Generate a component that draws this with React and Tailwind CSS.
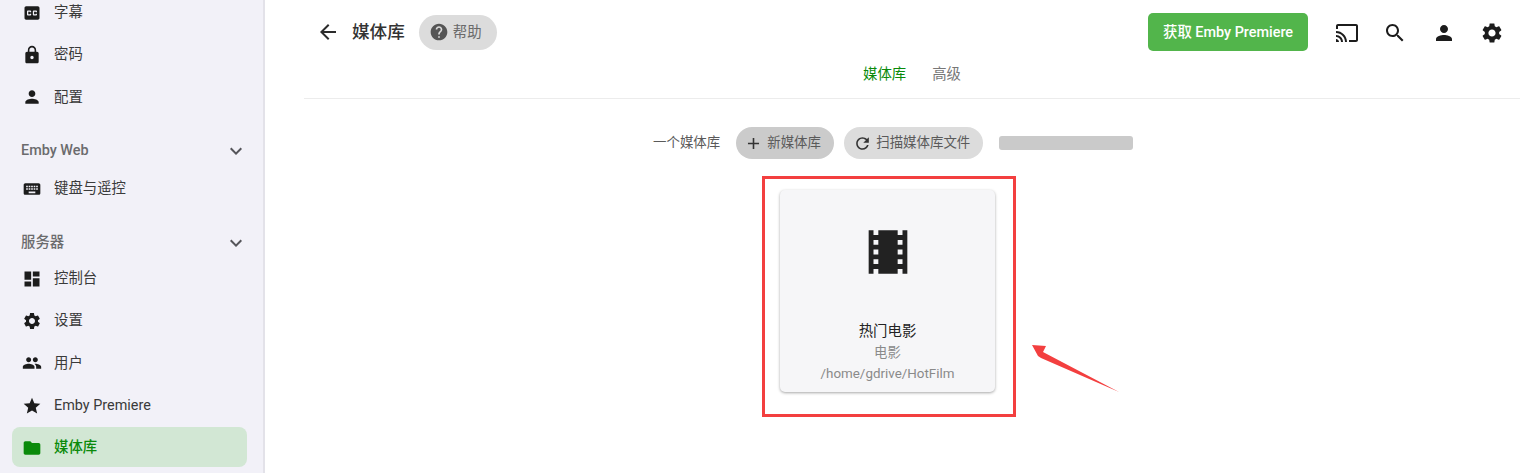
import React from "react";

const P = {
  cc: "M19 4H5c-1.11 0-2 .9-2 2v12c0 1.1.89 2 2 2h14c1.1 0 2-.9 2-2V6c0-1.1-.9-2-2-2zm-8 7H9.5v-.5h-2v3h2V13H11v1c0 .55-.45 1-1 1H7c-.55 0-1-.45-1-1v-4c0-.55.45-1 1-1h3c.55 0 1 .45 1 1v1zm7 0h-1.5v-.5h-2v3h2V13H18v1c0 .55-.45 1-1 1h-3c-.55 0-1-.45-1-1v-4c0-.55.45-1 1-1h3c.55 0 1 .45 1 1v1z",
  lock: "M18 8h-1V6c0-2.76-2.24-5-5-5S7 3.24 7 6v2H6c-1.1 0-2 .9-2 2v10c0 1.1.9 2 2 2h12c1.1 0 2-.9 2-2V10c0-1.1-.9-2-2-2zm-6 9c-1.1 0-2-.9-2-2s.9-2 2-2 2 .9 2 2-.9 2-2 2zm3.1-9H8.9V6c0-1.71 1.39-3.1 3.1-3.1 1.71 0 3.1 1.39 3.1 3.1v2z",
  person: "M12 12c2.21 0 4-1.79 4-4s-1.79-4-4-4-4 1.79-4 4 1.79 4 4 4zm0 2c-2.67 0-8 1.34-8 4v2h16v-2c0-2.66-5.33-4-8-4z",
  keyboard: "M20 5H4c-1.1 0-1.99.9-1.99 2L2 17c0 1.1.9 2 2 2h16c1.1 0 2-.9 2-2V7c0-1.1-.9-2-2-2zm-9 3h2v2h-2V8zm0 3h2v2h-2v-2zM8 8h2v2H8V8zm0 3h2v2H8v-2zm-1 2H5v-2h2v2zm0-3H5V8h2v2zm9 7H8v-2h8v2zm0-4h-2v-2h2v2zm0-3h-2V8h2v2zm3 3h-2v-2h2v2zm0-3h-2V8h2v2z",
  dashboard: "M3 13h8V3H3v10zm0 8h8v-6H3v6zm10 0h8V11h-8v10zm0-18v6h8V3h-8z",
  settings: "M19.14 12.94c.04-.3.06-.61.06-.94 0-.32-.02-.64-.07-.94l2.03-1.58c.18-.14.23-.41.12-.61l-1.92-3.32c-.12-.22-.37-.29-.59-.22l-2.39.96c-.5-.38-1.03-.7-1.62-.94l-.36-2.54c-.04-.24-.24-.41-.48-.41h-3.84c-.24 0-.43.17-.47.41l-.36 2.54c-.59.24-1.13.57-1.62.94l-2.39-.96c-.22-.08-.47 0-.59.22L2.74 8.87c-.12.21-.08.47.12.61l2.03 1.58c-.05.3-.09.63-.09.94s.02.64.07.94l-2.03 1.58c-.18.14-.23.41-.12.61l1.92 3.32c.12.22.37.29.59.22l2.39-.96c.5.38 1.03.7 1.62.94l.36 2.54c.05.24.24.41.48.41h3.84c.24 0 .44-.17.47-.41l.36-2.54c.59-.24 1.13-.56 1.62-.94l2.39.96c.22.08.47 0 .59-.22l1.92-3.32c.12-.22.07-.47-.12-.61l-2.01-1.58zM12 15.6c-1.98 0-3.6-1.62-3.6-3.6s1.62-3.6 3.6-3.6 3.6 1.62 3.6 3.6-1.62 3.6-3.6 3.6z",
  people: "M16 11c1.66 0 2.99-1.34 2.99-3S17.66 5 16 5c-1.66 0-3 1.34-3 3s1.34 3 3 3zm-8 0c1.66 0 2.99-1.34 2.99-3S9.66 5 8 5C6.34 5 5 6.34 5 8s1.34 3 3 3zm0 2c-2.33 0-7 1.17-7 3.5V19h14v-2.5c0-2.33-4.67-3.5-7-3.5zm8 0c-.29 0-.62.02-.97.05 1.16.84 1.97 1.97 1.97 3.45V19h6v-2.5c0-2.33-4.67-3.5-7-3.5z",
  star: "M12 17.27L18.18 21l-1.64-7.03L22 9.24l-7.19-.61L12 2 9.19 8.63 2 9.24l5.46 4.73L5.82 21z",
  folder: "M10 4H4c-1.1 0-1.99.9-1.99 2L2 18c0 1.1.9 2 2 2h16c1.1 0 2-.9 2-2V8c0-1.1-.9-2-2-2h-8l-2-2z",
  expand: "M16.59 8.59L12 13.17 7.41 8.59 6 10l6 6 6-6z",
  back: "M20 11H7.83l5.59-5.59L12 4l-8 8 8 8 1.41-1.41L7.83 13H20v-2z",
  help: "M12 2C6.48 2 2 6.48 2 12s4.48 10 10 10 10-4.48 10-10S17.52 2 12 2zm1 17h-2v-2h2v2zm2.07-7.75l-.9.92C13.45 12.9 13 13.5 13 15h-2v-.5c0-1.1.45-2.1 1.17-2.83l1.24-1.26c.37-.36.59-.86.59-1.41 0-1.1-.9-2-2-2s-2 .9-2 2H8c0-2.21 1.79-4 4-4s4 1.79 4 4c0 .88-.36 1.68-.93 2.25z",
  cast: "M21 3H3c-1.1 0-2 .9-2 2v3h2V5h18v14h-7v2h7c1.1 0 2-.9 2-2V5c0-1.1-.9-2-2-2zM1 18v3h3c0-1.66-1.34-3-3-3zm0-4v2c2.76 0 5 2.24 5 5h2c0-3.87-3.13-7-7-7zm0-4v2c4.97 0 9 4.03 9 9h2c0-6.08-4.93-11-11-11z",
  search: "M15.5 14h-.79l-.28-.27C15.41 12.59 16 11.11 16 9.5 16 5.91 13.09 3 9.5 3S3 5.91 3 9.5 5.91 16 9.5 16c1.61 0 3.09-.59 4.23-1.57l.27.28v.79l5 4.99L20.49 19l-4.99-5zm-6 0C7.01 14 5 11.99 5 9.5S7.01 5 9.5 5 14 7.01 14 9.5 11.99 14 9.5 14z",
  add: "M19 13h-6v6h-2v-6H5v-2h6V5h2v6h6v2z",
  refresh: "M17.65 6.35C16.2 4.9 14.21 4 12 4c-4.42 0-7.99 3.58-7.99 8s3.57 8 7.99 8c3.73 0 6.84-2.55 7.73-6h-2.08c-.82 2.33-3.04 4-5.65 4-3.31 0-6-2.69-6-6s2.69-6 6-6c1.66 0 3.14.69 4.22 1.78L13 11h7V4l-2.35 2.35z",
  movie: "M18 3v2h-2V3H8v2H6V3H4v18h2v-2h2v2h8v-2h2v2h2V3h-2zM8 17H6v-2h2v2zm0-4H6v-2h2v2zm0-4H6V7h2v2zm10 8h-2v-2h2v2zm0-4h-2v-2h2v2zm0-4h-2V7h2v2z",
};

function Icon({ d, className }) {
  return (
    <svg viewBox="0 0 24 24" fill="currentColor" className={className}>
      <path d={P[d]} />
    </svg>
  );
}

function Row({ icon, label, active }) {
  return (
    <div
      className={
        "flex items-center h-10 pt-[2px] mb-[2.2px] ml-3 mr-4 pl-[10px] rounded-lg text-[14.4px] " +
        (active ? "bg-[#d2e7d4] text-[#0a8a0a] font-medium" : "text-[#3a3a3a]")
      }
    >
      <Icon d={icon} className={"w-5 h-5 shrink-0 " + (active ? "text-[#0a8a0a]" : "text-[#1c1c1c]")} />
      <span className="ml-3">{label}</span>
    </div>
  );
}

function Group({ label, className }) {
  return (
    <div className={"flex items-center justify-between h-[22px] pl-[21px] pr-[15px] text-[14.4px] font-medium text-[#6b6b6d] " + className}>
      <span>{label}</span>
      <Icon d="expand" className="w-6 h-6 text-[#55555a]" />
    </div>
  );
}

export default function App() {
  return (
    <div className="relative flex h-[473px] w-full overflow-hidden bg-white font-['Roboto','Noto_Sans_CJK_SC',sans-serif]">
      <aside className="w-[265px] shrink-0 bg-[#f2f1f8] border-r-2 border-[#e3e2e9] -mt-[8px] h-[481px]">
        <Row icon="cc" label="字幕" />
        <Row icon="lock" label="密码" />
        <Row icon="person" label="配置" />
        <Group label="Emby Web" className="mt-[23.4px] mb-[6px]" />
        <Row icon="keyboard" label="键盘与遥控" />
        <Group label="服务器" className="mt-[24px] mb-[4.2px]" />
        <Row icon="dashboard" label="控制台" />
        <Row icon="settings" label="设置" />
        <Row icon="people" label="用户" />
        <Row icon="star" label="Emby Premiere" />
        <Row icon="folder" label="媒体库" active />
      </aside>

      <main className="flex-1 pl-[39px] pr-4">
        <div className="flex items-center h-[38px] mt-[13px] text-[#222]">
          <Icon d="back" className="w-6 h-6 ml-[12px] text-[#2b2b2b]" />
          <h1 className="ml-[12px] pt-px text-[17.6px] font-medium text-[#333]">媒体库</h1>
          <div className="ml-[14px] flex items-center h-[35px] w-[78px] rounded-full bg-[#dcdcdc] pl-[10px] text-[14.4px] text-[#6a6a6a]">
            <Icon d="help" className="w-[20px] h-[20px] text-[#555]" />
            <span className="ml-[4px] pt-px">帮助</span>
          </div>
          <div className="ml-auto flex items-center justify-center h-[38px] w-[160px] pt-px rounded-[5px] bg-[#52b54b] text-[14.4px] font-medium text-white">
            获取 Emby Premiere
          </div>
          <div className="flex items-center mt-[2px] ml-[26.8px] mr-[16px] gap-[24.4px]">
            <Icon d="cast" className="w-6 h-6 text-[#1c1c1c]" />
            <Icon d="search" className="w-6 h-6 text-[#1c1c1c]" />
            <Icon d="person" className="w-6 h-6 text-[#1c1c1c]" />
            <Icon d="settings" className="w-6 h-6 text-[#1c1c1c]" />
          </div>
        </div>

        <div className="flex justify-center items-center gap-[26px] h-[24px] mt-[12px] text-[14.4px]">
          <span className="text-[#0a8a0a]">媒体库</span>
          <span className="text-[#777]">高级</span>
        </div>
        <div className="h-px bg-[#ececec] mt-[11px]" />

        <div className="flex items-center h-[32px] mt-[28px] ml-[349px] text-[13.44px] text-[#5a5a5a]">
          <span className="pt-px">一个媒体库</span>
          <div className="ml-[16px] flex items-center h-[32px] w-[98px] rounded-full bg-[#cbcbcb] pl-[8px]">
            <Icon d="add" className="w-[19px] h-[19px] text-[#333]" />
            <span className="ml-[4px] pt-px">新媒体库</span>
          </div>
          <div className="ml-[10px] flex items-center h-[32px] w-[139px] rounded-full bg-[#dcdcdc] pl-[8.5px]">
            <Icon d="refresh" className="w-[19px] h-[19px] text-[#333]" />
            <span className="ml-[4.5px] pt-px">扫描媒体库文件</span>
          </div>
          <div className="ml-[16px] h-[14px] w-[134px] rounded-[3px] bg-[#cacaca]" />
        </div>

        <div className="mt-[31px] ml-[476px] flex flex-col items-center w-[215px] h-[202px] rounded-[5px] bg-[#f6f6f8] shadow-[0_1px_3px_rgba(0,0,0,0.35)]">
          <Icon d="movie" className="w-[58px] h-[58px] mt-[33px] text-[#222]" />
          <div className="mt-[40px] text-[14.4px] leading-[21px] text-[#222]">热门电影</div>
          <div className="text-[13.4px] leading-[21px] text-[#8a8a8a]">电影</div>
          <div className="text-[13.4px] leading-[21px] text-[#8a8a8a]">/home/gdrive/HotFilm</div>
        </div>
      </main>

      <div className="absolute left-[762px] top-[176px] w-[254px] h-[241px] border-[3px] border-[#f33f3f]" />
      <svg className="absolute left-[1025px] top-[338px]" width="100" height="60" viewBox="1025 338 100 60">
        <polygon points="1032,345 1046,346 1043,352 1119,392 1041,358 1038,356" fill="#f33f3f" />
      </svg>
    </div>
  );
}
